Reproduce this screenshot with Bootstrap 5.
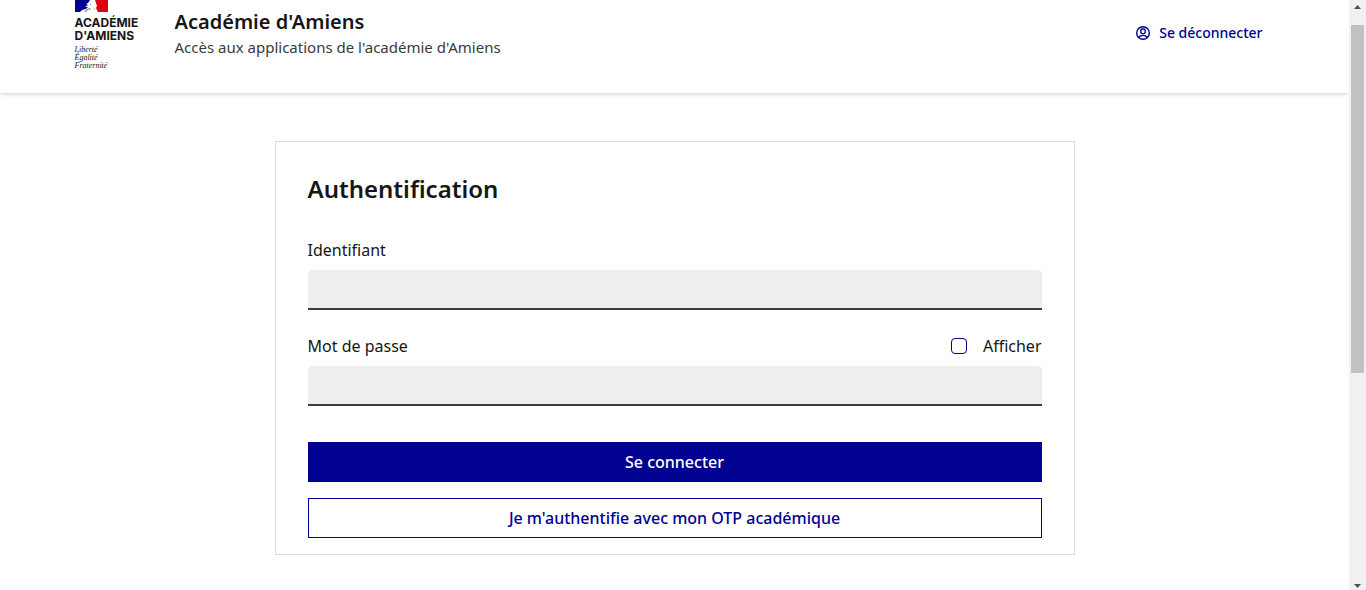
<!DOCTYPE html>
<html lang="fr">
<head>
<meta charset="utf-8">
<meta name="viewport" content="width=device-width, initial-scale=1">
<title>Authentification - Académie d'Amiens</title>
<link rel="stylesheet" href="https://cdn.jsdelivr.net/npm/bootstrap@5.3.0/dist/css/bootstrap.min.css">
<style>
  :root { --blue: #000091; --ink: #161616; --soft: #3a3a3a; }
  body { font-family: "Noto Sans", "Liberation Sans", sans-serif; font-size: 16px; line-height: 24px; color: var(--ink); background: #fff; }
  .page-wrap { max-width: 1200px; }
  .site-header { min-height: 93px; box-shadow: 0 1px 4px rgba(0, 0, 18, .2); }
  .brand-block { width: 68px; }
  .brand-flag { width: 33px; height: 12px; }
  .brand-name { font-family: Inter, "Noto Sans", sans-serif; font-size: 12px; line-height: 13px; font-weight: 700; margin-top: 4px; }
  .brand-motto { font-family: "Liberation Serif", serif; font-style: italic; font-size: 8px; line-height: 8px; margin-top: 4px; }
  .service { margin-left: 32px; padding-top: 8px; }
  .service-title { font-size: 20px; line-height: 28px; font-weight: 600; }
  .service-tagline { font-size: 15px; line-height: 22px; color: var(--soft); }
  .logout { color: var(--blue); font-size: 14px; font-weight: 500; padding: 21px 12px 0; }
  .login-card { max-width: 800px; margin: 48px auto 35px; padding: 31px 32px 16px; border: 1px solid #ddd; }
  .login-title { font-size: 24px; line-height: 32px; font-weight: 600; margin-bottom: 33px; }
  .field { height: 40px; border: 0; border-bottom: 2px solid var(--soft); border-radius: 4px 4px 0 0; background: #eee; }
  .field:focus { background: #eee; box-shadow: none; outline: 2px solid #0a76f6; }
  .show-check { width: 16px; height: 16px; margin: 0; border: 1px solid var(--blue); }
  .actions { margin-top: 36px; }
  .btn-flat { --bs-btn-border-radius: 0; --bs-btn-color: var(--blue); --bs-btn-border-color: var(--blue); --bs-btn-hover-color: var(--blue); --bs-btn-hover-bg: #f6f6f6; height: 40px; padding: 0 16px; font-weight: 500; }
  .btn-fill { --bs-btn-bg: var(--blue); --bs-btn-color: #fff; --bs-btn-hover-bg: #1212ff; --bs-btn-hover-color: #fff; }
  .scroll-rail { width: 17px; background: #f1f1f1; padding: 5px 2px 2px; }
  .scroll-thumb { height: 59vh; margin-top: 16px; background: #c1c1c1; }
</style>
</head>
<body>
<div class="d-flex min-vh-100">
  <div class="flex-grow-1">
    <header class="site-header">
      <div class="page-wrap mx-auto d-flex align-items-start">
        <div class="brand-block flex-shrink-0">
          <svg class="brand-flag d-block" viewBox="0 0 33 12" aria-hidden="true">
            <path fill="#fff" d="M0 0h33v12H0z"/>
            <path fill="#000091" d="M0 0h15l-2 3-2 1 2 1-3 2 3 0-2 2-4 1-2 2H0z"/>
            <path fill="#e1000f" d="M20 0h13v12H23l-1-2-1-2 1-2-1-3z"/>
            <path fill="#8f8fb0" d="M12 9l3-1 1 1-3 1-2 2h-2zM19 8l2 2-2-1zM15 4h1v1h-1z"/>
          </svg>
          <div class="brand-name">ACADÉMIE<br>D'AMIENS</div>
          <div class="brand-motto">Liberté<br>Égalité<br>Fraternité</div>
        </div>
        <div class="service">
          <div class="service-title">Académie d'Amiens</div>
          <div class="service-tagline">Accès aux applications de l'académie d'Amiens</div>
        </div>
        <a href="#" class="logout ms-auto d-flex align-items-center gap-2 text-decoration-none">
          <svg width="16" height="16" viewBox="0 0 16 16" fill="none" stroke="currentColor" stroke-width="1.4" aria-hidden="true">
            <circle cx="8" cy="8" r="6.3"/><rect x="5.8" y="4" width="4.4" height="4.6" rx="1.5"/><path d="M3.7 12.500c1-1.400 2.500-2.100 4.300-2.100s3.300.7 4.300 2.100"/>
          </svg>
          Se déconnecter
        </a>
      </div>
    </header>
    <main>
      <form class="login-card">
        <h1 class="login-title">Authentification</h1>
        <div class="mb-4">
          <label for="user" class="d-block mb-2">Identifiant</label>
          <input id="user" type="text" class="form-control field">
        </div>
        <div>
          <div class="d-flex justify-content-between mb-2">
            <label for="pass">Mot de passe</label>
            <div class="d-flex align-items-center gap-3">
              <input id="show" type="checkbox" class="form-check-input show-check">
              <label for="show">Afficher</label>
            </div>
          </div>
          <input id="pass" type="password" class="form-control field">
        </div>
        <div class="actions d-grid gap-3">
          <button type="submit" class="btn btn-flat btn-fill">Se connecter</button>
          <button type="button" class="btn btn-flat">Je m'authentifie avec mon OTP académique</button>
        </div>
      </form>
    </main>
  </div>
  <div class="scroll-rail d-flex flex-column flex-shrink-0" aria-hidden="true">
    <svg class="align-self-center" width="7" height="4" viewBox="0 0 7 4"><path fill="#505050" d="M0 4h7L3.500 0z"/></svg>
    <div class="scroll-thumb"></div>
    <svg class="align-self-center mt-auto" width="7" height="4" viewBox="0 0 7 4"><path fill="#505050" d="M0 0h7L3.500 4z"/></svg>
  </div>
</div>
<script src="https://cdn.jsdelivr.net/npm/bootstrap@5.3.0/dist/js/bootstrap.bundle.min.js"></script>
</body>
</html>
